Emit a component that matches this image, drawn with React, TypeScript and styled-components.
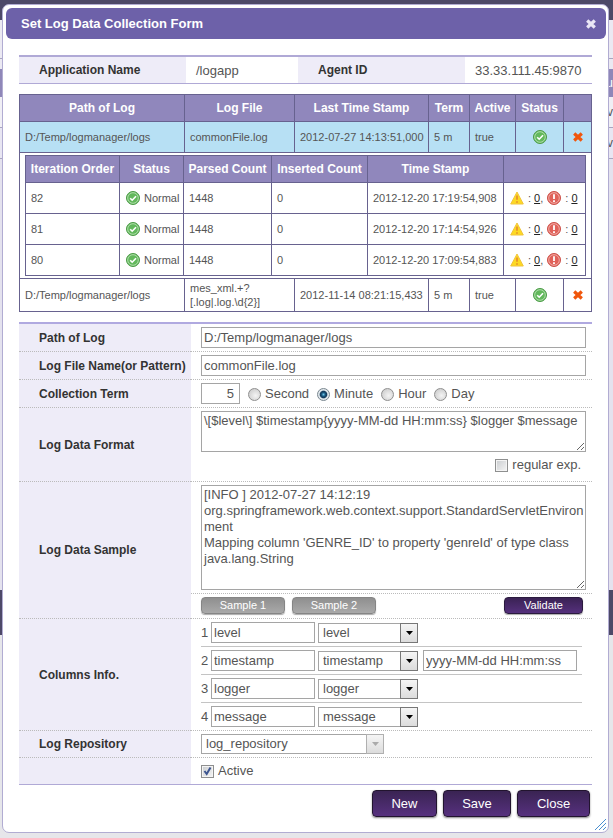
import React, { useState } from "react";
import styled, { createGlobalStyle, css } from "styled-components";

const Global = createGlobalStyle`
  * { box-sizing: border-box; }
  body { margin: 0; background: #e8e8ec; }
  body, input, textarea, select, button {
    font-family: "Liberation Sans", Arial, Helvetica, sans-serif;
    font-size: 13px;
    line-height: 16px;
    color: #555;
  }
`;

const line = "#67628f";
const head = "#9087bc";
const tint = "#eeecf8";

const Page = styled.div`
  position: relative;
  min-height: 100vh;
  padding: 4px 4px 4px 2px;
`;

const Backdrop = styled.div`
  position: absolute;
  inset: 0;
  display: flex;
  flex-direction: column;
  overflow: hidden;
  font-size: 12px;
`;

const Band = styled.div<{ $h?: number; $bg: string; $ink?: string }>`
  flex: ${(p) => (p.$h ? `0 0 ${p.$h}px` : "1 1 auto")};
  background: ${(p) => p.$bg};
  color: ${(p) => p.$ink || "#555"};
  display: flex;
  align-items: center;
  justify-content: flex-end;
`;

const RuledBand = styled(Band)`
  border-bottom: 1px solid #a9a5c0;
`;

const Dialog = styled.div`
  position: relative;
  background: #fff;
  border: 1px solid #b1acd2;
  border-radius: 7px;
  padding: 3px 2px 15px 3px;
`;

const TitleBar = styled.header`
  display: flex;
  align-items: center;
  justify-content: space-between;
  height: 31px;
  padding: 0 10px 0 15px;
  background: #6d61a9;
  border-radius: 6px;
  color: #fff;
`;

const Title = styled.h1`
  margin: 0;
  font-size: 13px;
  line-height: 16px;
  font-weight: bold;
`;

const IconButton = styled.button`
  display: inline-flex;
  vertical-align: middle;
  padding: 0;
  border: 0;
  background: none;
  cursor: pointer;
`;

const Content = styled.main`
  padding: 16px 14px 0 13px;
`;

const InfoBar = styled.dl`
  display: grid;
  grid-template-columns: 167fr 112fr 167fr 127fr;
  margin: 0 0 10px;
  border-top: 2px solid #b0a9d6;
  border-bottom: 1px solid #b0a9d6;
`;

const InfoLabel = styled.dt`
  padding: 5px 20px;
  height: 26px;
  background: ${tint};
  color: #333;
  font-size: 12px;
  font-weight: bold;
`;

const InfoValue = styled.dd`
  margin: 0;
  padding: 6px 10px 0;
  white-space: nowrap;
`;

const Table = styled.table`
  width: 100%;
  border-collapse: collapse;
  table-layout: fixed;
  font-size: 11px;
  line-height: 14px;
`;

const Th = styled.th`
  height: 27px;
  padding: 0;
  border: 1px solid ${line};
  background: ${head};
  color: #fff;
  font-size: 12px;
  white-space: nowrap;
`;

const Tr = styled.tr<{ $selected?: boolean }>`
  background: ${(p) => (p.$selected ? "#b7e0f4" : "#fff")};
`;

const Td = styled.td<{ $tight?: boolean }>`
  height: ${(p) => (p.$tight ? 33 : 31)}px;
  padding: 0 5px;
  border: 1px solid ${line};
  white-space: nowrap;
`;

const CellIcon = styled.span`
  display: flex;
  justify-content: center;
`;

const NestCell = styled.td`
  padding: 2px 5px;
  border: 1px solid ${line};
`;

const Inline = styled.span`
  display: flex;
  align-items: center;
  gap: 4px;
  padding-left: 1px;
  white-space: nowrap;
  svg { flex: none; }
`;

const CountLink = styled.a`
  color: #222;
  text-decoration: underline;
`;

const Form = styled.form`
  margin-top: 10px;
`;

const Rows = styled.div`
  border-top: 2px solid #b0a9e0;
  border-bottom: 1px solid #b0a9d6;
`;

const FormRow = styled.div`
  display: grid;
  grid-template-columns: 172px 1fr;
  & + & > * { border-top: 1px dotted #bbb; }
`;

const labelCss = css`
  display: flex;
  align-items: center;
  padding-left: 20px;
  background: ${tint};
  color: #333;
  font-size: 12px;
  font-weight: bold;
`;
const Label = styled.label`${labelCss}`;
const LabelText = styled.span`${labelCss}`;

const Value = styled.div`
  padding: 3px 6px 3px 10px;
  min-width: 0;
`;

const FlushValue = styled.div`
  min-width: 0;
`;

const ActiveValue = styled(Value)`
  padding-top: 5px;
  padding-bottom: 5px;
`;

const TextInput = styled.input<{ $w?: string; $right?: boolean }>`
  display: block;
  width: ${(p) => p.$w || "100%"};
  height: 21px;
  padding: 0 2px;
  border: 1px solid #a5a5a5;
  background: #fff;
  text-align: ${(p) => (p.$right ? "right" : "left")};
  outline: none;
`;

const NumberInput = styled(TextInput)`
  padding-right: 5px;
`;

const FormatInput = styled(TextInput)`
  margin-left: 2px;
`;

const Area = styled.textarea<{ $h: number }>`
  display: block;
  width: 100%;
  height: ${(p) => p.$h}px;
  padding: 1px 0 1px 2px;
  border: 1px solid #a5a5a5;
  background: #fff;
  resize: vertical;
  overflow: hidden;
  outline: none;
`;

const Flex = styled.div<{ $gap?: number }>`
  display: flex;
  align-items: center;
  gap: ${(p) => p.$gap || 0}px;
`;

const Choice = styled.label`
  display: flex;
  align-items: center;
  gap: 4px;
`;

const Radio = styled.input`
  appearance: none;
  width: 13px;
  height: 13px;
  margin: 2px 0 0;
  border: 1px solid #8f8f8f;
  border-radius: 50%;
  background: radial-gradient(circle at 60% 60%, #f4f4f4, #c4c4c4);
  &:checked {
    border-color: #7a8790;
    background: radial-gradient(circle at 50% 50%, #6cc4e8 0, #17547c 25%, #123a5a 42%, #e4eaee 56%, #d5dde2 100%);
  }
`;

const Check = styled.input`
  appearance: none;
  width: 13px;
  height: 13px;
  margin: 1px 0 0;
  border: 1px solid #8e8f8f;
  background: linear-gradient(135deg, #c9cccf, #f5f5f5);
  box-shadow: inset 0 0 0 1px #f4f4f4;
`;

const CheckWrap = styled.span`
  position: relative;
  display: inline-flex;
  svg { position: absolute; left: 2px; top: 2px; pointer-events: none; display: none; }
  input:checked + svg { display: block; }
`;

const RegexRow = styled.div`
  display: flex;
  align-items: flex-start;
  justify-content: flex-end;
  height: 26px;
  padding: 5px 5px 0 0;
`;

const SampleBar = styled.div`
  display: flex;
  gap: 7px;
  padding: 3px 9px 4px 10px;
  border-top: 1px dotted #bbb;
`;

const SmallButton = styled.button<{ $dark?: boolean }>`
  width: ${(p) => (p.$dark ? 79 : 84)}px;
  height: 17px;
  margin-left: ${(p) => (p.$dark ? "auto" : "0")};
  padding: 0;
  border: 1px solid ${(p) => (p.$dark ? "#2a1a3e" : "#858585")};
  border-radius: 4px;
  background: ${(p) => (p.$dark ? "linear-gradient(#3a2254, #55307c)" : "linear-gradient(#8f8f8f, #a9a9a9)")};
  box-shadow: 0 1px 1px #aaa;
  color: #fff;
  font-size: 11px;
  line-height: 13px;
`;

const ColumnList = styled.div`
  padding: 0 10px;
`;

const ColumnRow = styled.div`
  display: flex;
  align-items: center;
  gap: 3px;
  height: 28px;
  border-bottom: 1px solid #c4c4c4;
  &:last-child { border-bottom: 0; height: 27px; }
`;

const Index = styled.span`
  width: 7px;
`;

const SelectWrap = styled.span<{ $w: number }>`
  position: relative;
  display: block;
  width: ${(p) => p.$w}px;
`;

const Select = styled.select`
  appearance: none;
  display: block;
  width: 100%;
  height: 20px;
  padding: 0 20px 0 4px;
  border: 1px solid #a5a5a5;
  border-radius: 0;
  background: #fff;
  opacity: 1;
  outline: none;
`;

const Arrow = styled.span<{ $muted?: boolean }>`
  position: absolute;
  top: 0;
  right: 0;
  bottom: 0;
  display: flex;
  align-items: center;
  justify-content: center;
  width: 18px;
  border: 1px solid ${(p) => (p.$muted ? "#b0b0b0" : "#777")};
  background: linear-gradient(#f5f5f5, #dcdcdc);
  color: ${(p) => (p.$muted ? "#aaa" : "#000")};
  pointer-events: none;
`;

const Actions = styled.footer`
  display: flex;
  justify-content: flex-end;
  gap: 6px;
  padding: 5px 2px 0 0;
`;

const ActionButton = styled.button<{ $w: number }>`
  width: ${(p) => p.$w}px;
  height: 27px;
  padding: 0;
  border: 1px solid #22142f;
  border-radius: 4px;
  background: linear-gradient(#3a2453, #56307e);
  box-shadow: 0 1px 2px #888;
  color: #fff;
  font-size: 13px;
`;

const Grip = styled.svg`
  position: absolute;
  right: 2px;
  bottom: 2px;
`;

const OkIcon = () => (
  <svg width="14" height="14" viewBox="0 0 14 14">
    <circle cx="7" cy="7" r="6.5" fill="#62b85c" stroke="#4a9a45" />
    <circle cx="7" cy="7" r="5.3" fill="none" stroke="#c3e6be" strokeWidth=".8" />
    <path d="M4.200 7.200l2 2L10 5.200" fill="none" stroke="#fff" strokeWidth="1.600" />
  </svg>
);

const WarnIcon = () => (
  <svg width="14" height="14" viewBox="0 0 14 14">
    <path d="M7 1L13.300 13H.7z" fill="#fdd923" stroke="#f0c43c" strokeLinejoin="round" />
    <path d="M7 4.500v4.300M7 10.200v1.600" stroke="#e58a2c" strokeWidth="1.600" />
  </svg>
);

const ErrorIcon = () => (
  <svg width="14" height="14" viewBox="0 0 14 14">
    <circle cx="7" cy="7" r="6.5" fill="#e0625a" stroke="#cc5048" />
    <circle cx="7" cy="7" r="5.3" fill="none" stroke="#f5beb8" strokeWidth=".8" />
    <path d="M7 3.200v4.800M7 9.300v1.700" stroke="#fff" strokeWidth="1.800" />
  </svg>
);

const Cross = ({ color, size }: { color: string; size: number }) => (
  <svg width={size} height={size} viewBox="0 0 10 10">
    <path d="M1.200 1.500l7.600 7M8.800 1.500l-7.600 7" stroke={color} strokeWidth="3.200" />
  </svg>
);

const Drop = ({ options, width, disabled, label, id }: { options: string[]; width: number; disabled?: boolean; label: string; id?: string }) => (
  <SelectWrap $w={width}>
    <Select id={id} aria-label={label} disabled={disabled} defaultValue={options[0]}>
      {options.map((o) => <option key={o}>{o}</option>)}
    </Select>
    <Arrow $muted={disabled}>
      <svg width="7" height="4" viewBox="0 0 7 4"><path d="M0 0h7L3.500 4z" fill="currentColor" /></svg>
    </Arrow>
  </SelectWrap>
);

const iterations = [
  { order: 82, time: "2012-12-20 17:19:54,908" },
  { order: 81, time: "2012-12-20 17:14:54,926" },
  { order: 80, time: "2012-12-20 17:09:54,883" },
];

const columns = ["level", "timestamp", "logger", "message"];
const terms = ["Second", "Minute", "Hour", "Day"];

const sample = `[INFO ] 2012-07-27 14:12:19
org.springframework.web.context.support.StandardServletEnvironment
Mapping column 'GENRE_ID' to property 'genreId' of type class java.lang.String`;

const widths = (list: number[]) => {
  const sum = list.reduce((a, b) => a + b, 0);
  return <colgroup>{list.map((w, i) => <col key={i} width={`${(w / sum) * 100}%`} />)}</colgroup>;
};

const LogCells = ({ file, time, tight }: { file: React.ReactNode; time: string; tight?: boolean }) => (
  <>
    <Td $tight={tight}>D:/Temp/logmanager/logs</Td>
    <Td $tight={tight}>{file}</Td>
    <Td $tight={tight}>{time}</Td>
    <Td $tight={tight}>5 m</Td>
    <Td $tight={tight}>true</Td>
    <Td $tight={tight}><CellIcon><OkIcon /></CellIcon></Td>
    <Td $tight={tight}>
      <CellIcon><IconButton type="button" aria-label="Delete"><Cross color="#f0560c" size={10} /></IconButton></CellIcon>
    </Td>
  </>
);

export default function App() {
  const [term, setTerm] = useState("Minute");
  return (
    <Page>
      <Global />
      <Backdrop aria-hidden="true">
        <Band $h={20} $bg="#4d4968" />
        <RuledBand $h={39} $bg="#ebe9f2" />
        <Band $h={10} $bg="#ebe9f2" />
        <Band $h={28} $bg="#8f87b8" $ink="#fff">u</Band>
        <RuledBand $h={31} $bg="#f0eff5">v</RuledBand>
        <RuledBand $h={31} $bg="#e8e6f2">v</RuledBand>
        <Band $h={431} $bg="#e4e2ee" />
        <Band $h={45} $bg="#4d4968" />
        <Band $bg="#e6e6ea" />
      </Backdrop>
      <Dialog role="dialog" aria-labelledby="dialog-title">
        <TitleBar>
          <Title id="dialog-title">Set Log Data Collection Form</Title>
          <IconButton type="button" aria-label="Close dialog"><Cross color="#e9e6f5" size={10} /></IconButton>
        </TitleBar>
        <Content>
          <InfoBar>
            <InfoLabel>Application Name</InfoLabel>
            <InfoValue>/logapp</InfoValue>
            <InfoLabel>Agent ID</InfoLabel>
            <InfoValue>33.33.111.45:9870</InfoValue>
          </InfoBar>
          <Table>
            {widths([165, 110, 134, 41, 46, 48, 28])}
            <thead>
              <tr>
                {["Path of Log", "Log File", "Last Time Stamp", "Term", "Active", "Status", ""].map((h) => <Th key={h}>{h}</Th>)}
              </tr>
            </thead>
            <tbody>
              <Tr $selected><LogCells file="commonFile.log" time="2012-07-27 14:13:51,000" /></Tr>
              <tr>
                <NestCell colSpan={7}>
                  <Table>
                    {widths([94, 64, 88, 96, 136, 82])}
                    <thead>
                      <tr>
                        {["Iteration Order", "Status", "Parsed Count", "Inserted Count", "Time Stamp", ""].map((h) => <Th key={h}>{h}</Th>)}
                      </tr>
                    </thead>
                    <tbody>
                      {iterations.map((it) => (
                        <Tr key={it.order}>
                          <Td>{it.order}</Td>
                          <Td><Inline><OkIcon />Normal</Inline></Td>
                          <Td>1448</Td>
                          <Td>0</Td>
                          <Td>{it.time}</Td>
                          <Td>
                            <Inline>
                              <WarnIcon /><span>: <CountLink href="#warnings">0</CountLink>,</span>
                              <ErrorIcon /><span>: <CountLink href="#errors">0</CountLink></span>
                            </Inline>
                          </Td>
                        </Tr>
                      ))}
                    </tbody>
                  </Table>
                </NestCell>
              </tr>
              <Tr><LogCells tight file={<>mes_xml.+?<br />[.log|.log.\d{"{2}"}]</>} time="2012-11-14 08:21:15,433" /></Tr>
            </tbody>
          </Table>
          <Form onSubmit={(e) => e.preventDefault()}>
            <Rows>
              <FormRow>
                <Label htmlFor="path">Path of Log</Label>
                <Value><TextInput id="path" defaultValue="D:/Temp/logmanager/logs" /></Value>
              </FormRow>
              <FormRow>
                <Label htmlFor="file">Log File Name(or Pattern)</Label>
                <Value><TextInput id="file" defaultValue="commonFile.log" /></Value>
              </FormRow>
              <FormRow>
                <Label htmlFor="term">Collection Term</Label>
                <Value>
                  <Flex $gap={8}>
                    <NumberInput id="term" $w="39px" $right defaultValue="5" />
                    {terms.map((t) => (
                      <Choice key={t}>
                        <Radio type="radio" name="unit" checked={term === t} onChange={() => setTerm(t)} />
                        {t}
                      </Choice>
                    ))}
                  </Flex>
                </Value>
              </FormRow>
              <FormRow>
                <Label htmlFor="format">Log Data Format</Label>
                <Value>
                  <Area id="format" $h={41} defaultValue={"\\[$level\\] $timestamp{yyyy-MM-dd HH:mm:ss} $logger $message"} />
                  <RegexRow>
                    <Choice><Check type="checkbox" />regular exp.</Choice>
                  </RegexRow>
                </Value>
              </FormRow>
              <FormRow>
                <Label htmlFor="sample">Log Data Sample</Label>
                <FlushValue>
                  <Value><Area id="sample" $h={105} defaultValue={sample} /></Value>
                  <SampleBar>
                    <SmallButton type="button">Sample 1</SmallButton>
                    <SmallButton type="button">Sample 2</SmallButton>
                    <SmallButton type="button" $dark>Validate</SmallButton>
                  </SampleBar>
                </FlushValue>
              </FormRow>
              <FormRow>
                <LabelText>Columns Info.</LabelText>
                <ColumnList>
                  {columns.map((c, i) => (
                    <ColumnRow key={c}>
                      <Index>{i + 1}</Index>
                      <TextInput $w="104px" aria-label={`Column ${i + 1} name`} defaultValue={c} />
                      <Drop width={100} label={`Column ${i + 1} type`} options={[c, ...columns.filter((o) => o !== c)]} />
                      {c === "timestamp" && <FormatInput $w="154px" aria-label="Timestamp format" defaultValue="yyyy-MM-dd HH:mm:ss" />}
                    </ColumnRow>
                  ))}
                </ColumnList>
              </FormRow>
              <FormRow>
                <Label htmlFor="repo">Log Repository</Label>
                <Value><Drop id="repo" width={183} label="Log Repository" options={["log_repository"]} disabled /></Value>
              </FormRow>
              <FormRow>
                <LabelText />
                <ActiveValue>
                  <Choice>
                    <CheckWrap>
                      <Check type="checkbox" defaultChecked />
                      <svg width="9" height="10" viewBox="0 0 9 10"><path d="M1.500 5l2.200 3L7.500 1.500" fill="none" stroke="#3d5590" strokeWidth="2" /></svg>
                    </CheckWrap>
                    Active
                  </Choice>
                </ActiveValue>
              </FormRow>
            </Rows>
            <Actions>
              <ActionButton type="button" $w={65}>New</ActionButton>
              <ActionButton type="submit" $w={68}>Save</ActionButton>
              <ActionButton type="button" $w={73}>Close</ActionButton>
            </Actions>
          </Form>
        </Content>
        <Grip width="12" height="12" viewBox="0 0 12 12">
          <path d="M1 12L12 1M5 12l7-7M9 12l3-3" stroke="#4a8fcf" strokeWidth="1" />
        </Grip>
      </Dialog>
    </Page>
  );
}
